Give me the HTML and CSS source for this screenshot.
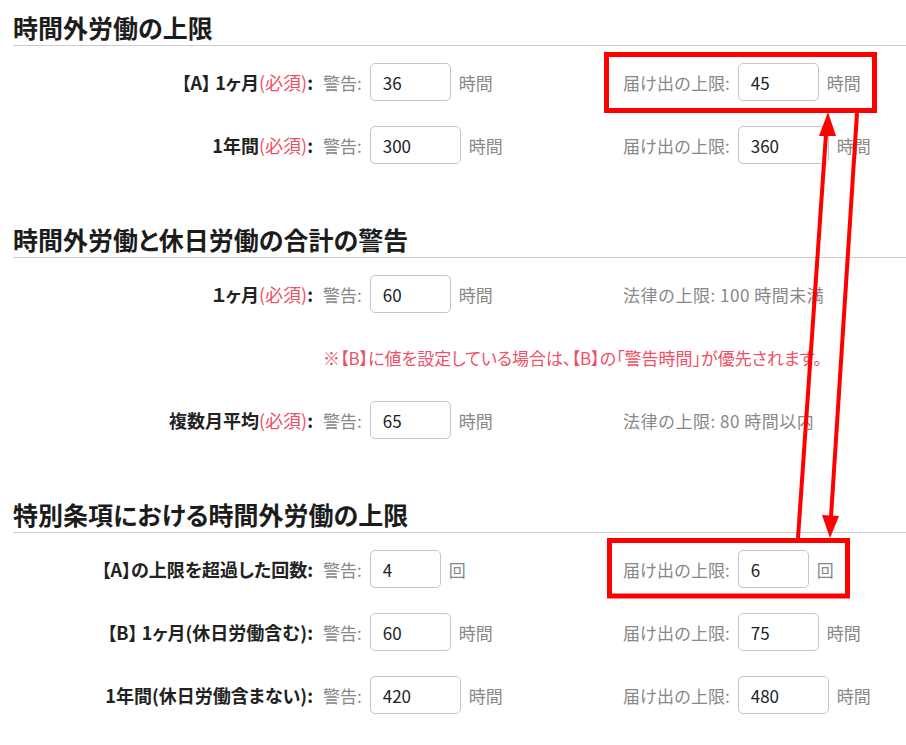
FILE: index.html
```html
<!DOCTYPE html>
<html lang="ja">
<head>
    <meta charset="UTF-8">
    <meta name="viewport" content="width=device-width, initial-scale=1.0">
    <title>36協定の上限設定</title>
    <link rel="stylesheet" href="styles.css">
</head>
<body>
    <div class="page">
        <section class="sec">
            <h2 class="sec-title">時間外労働の上限</h2>
            <div class="rows">
                <div class="row">
                    <div class="label">【A】 1ヶ月<span class="req">(必須)</span>:</div>
                    <div class="field"><span class="cap">警告:</span><input class="num w2" value="36"><span class="unit">時間</span></div>
                    <div class="field"><span class="cap">届け出の上限:</span><input class="num w2" value="45"><span class="unit">時間</span></div>
                </div>
                <div class="row">
                    <div class="label">1年間<span class="req">(必須)</span>:</div>
                    <div class="field"><span class="cap">警告:</span><input class="num w3" value="300"><span class="unit">時間</span></div>
                    <div class="field"><span class="cap">届け出の上限:</span><input class="num w3" value="360"><span class="unit">時間</span></div>
                </div>
            </div>
        </section>

        <section class="sec">
            <h2 class="sec-title">時間外労働と休日労働の合計の警告</h2>
            <div class="rows">
                <div class="row">
                    <div class="label">１ヶ月<span class="req">(必須)</span>:</div>
                    <div class="field"><span class="cap">警告:</span><input class="num w2" value="60"><span class="unit">時間</span></div>
                    <div class="field"><span class="cap law">法律の上限: 100 時間未満</span></div>
                </div>
                <div class="row">
                    <p class="note">※【B】に値を設定している場合は、【B】の「警告時間」が優先されます。</p>
                </div>
                <div class="row">
                    <div class="label">複数月平均<span class="req">(必須)</span>:</div>
                    <div class="field"><span class="cap">警告:</span><input class="num w2" value="65"><span class="unit">時間</span></div>
                    <div class="field"><span class="cap law">法律の上限: 80 時間以内</span></div>
                </div>
            </div>
        </section>

        <section class="sec">
            <h2 class="sec-title">特別条項における時間外労働の上限</h2>
            <div class="rows">
                <div class="row">
                    <div class="label">【A】の上限を超過した回数:</div>
                    <div class="field"><span class="cap">警告:</span><input class="num w1" value="4"><span class="unit">回</span></div>
                    <div class="field"><span class="cap">届け出の上限:</span><input class="num w1" value="6"><span class="unit">回</span></div>
                </div>
                <div class="row">
                    <div class="label">【B】 1ヶ月(休日労働含む):</div>
                    <div class="field"><span class="cap">警告:</span><input class="num w2" value="60"><span class="unit">時間</span></div>
                    <div class="field"><span class="cap">届け出の上限:</span><input class="num w2" value="75"><span class="unit">時間</span></div>
                </div>
                <div class="row">
                    <div class="label">1年間(休日労働含まない):</div>
                    <div class="field"><span class="cap">警告:</span><input class="num w3" value="420"><span class="unit">時間</span></div>
                    <div class="field"><span class="cap">届け出の上限:</span><input class="num w3" value="480"><span class="unit">時間</span></div>
                </div>
            </div>
        </section>
    </div>

    <!-- annotation: the two linked limits -->
    <svg class="marks" width="906" height="745" viewBox="0 0 906 745">
        <g fill="none" stroke="#ff0000" stroke-width="5">
            <rect x="606.5" y="54.5" width="268" height="56"/>
            <rect x="609.5" y="540.5" width="238" height="55.5"/>
        </g>
        <g stroke="#ff0000" stroke-width="4">
            <line x1="798" y1="538" x2="826" y2="134"/>
            <line x1="857" y1="113" x2="831" y2="517"/>
        </g>
        <g fill="#ff0000">
            <polygon points="828,112 819,136 836,136"/>
            <polygon points="830,538 822,515 839,516"/>
        </g>
    </svg>
</body>
</html>
```

FILE: styles.css
```css
body {
    margin: 0;
    font-family: "Noto Sans CJK JP", "Noto Sans", sans-serif;
    font-size: 17px;
    color: #222;
    background: #fff;
}

.page {
    padding: 9px 0 0 13px;
}

.sec {
    margin-bottom: 57px;
}

.sec-title {
    margin: 0;
    font-size: 25px;
    font-weight: bold;
    line-height: 36px;
    color: #1c1c1c;
    border-bottom: 1px solid #cccccc;
    font-feature-settings: "palt";
}

.rows {
    padding-top: 17px;
    display: flex;
    flex-direction: column;
    gap: 25px;
}

.row {
    display: grid;
    grid-template-columns: 300px 300px 1fr;
    align-items: center;
    height: 38px;
}

.label {
    text-align: right;
    font-size: 18px;
    font-weight: bold;
    white-space: nowrap;
    font-feature-settings: "palt";
}

.req {
    color: #ef4f68;
    font-weight: normal;
}

.field {
    display: flex;
    align-items: center;
    padding-left: 10px;
    white-space: nowrap;
}

.cap {
    color: #888;
    margin-right: 8px;
}

.law {
    letter-spacing: 0.5px;
}

.unit {
    color: #888;
    margin-left: 8px;
}

.num {
    box-sizing: border-box;
    height: 38px;
    padding: 0 12px;
    border: 1px solid #c6c6c6;
    border-radius: 5px;
    font-family: inherit;
    font-size: 17px;
    color: #222;
    background: #fff;
}

.w1 { width: 71px; }
.w2 { width: 81px; }
.w3 { width: 91px; }

.note {
    grid-column: 2 / span 2;
    margin: 0;
    padding-left: 10px;
    color: #ef4f68;
    font-feature-settings: "palt";
    white-space: nowrap;
}

.marks {
    position: absolute;
    top: 0;
    left: 0;
    pointer-events: none;
}
```
